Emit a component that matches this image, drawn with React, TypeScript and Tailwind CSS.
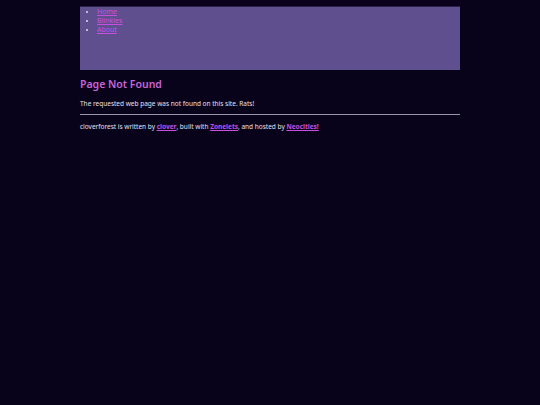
export default function App() {
  const font = { fontFamily: '"Noto Sans", "Open Sans", sans-serif' };
  return (
    <div className="min-h-[405px] w-full bg-[#08031a] text-[#e6e0f0]" style={font}>
      <div className="mx-auto w-[380px] pt-[6px]">
        <nav className="h-[64px] border-t border-[#2a2146] bg-[#5f4f8f]">
          <ul className="list-disc pl-[17px] text-[7px] leading-[9px] marker:text-[#e0d8f0]">
            <li><a href="#" className="text-[#c84fe0] underline">Home</a></li>
            <li><a href="#" className="text-[#c84fe0] underline">Blinkies</a></li>
            <li><a href="#" className="text-[#c84fe0] underline">About</a></li>
          </ul>
        </nav>
        <h1 className="mt-[7px] text-[10.5px] font-semibold leading-[14px] text-[#c963dc]">Page Not Found</h1>
        <p className="mt-[8px] text-[6.5px] leading-[9px]">The requested web page was not found on this site. Rats!</p>
        <hr className="mt-[6px] border-t border-[#9a96a8]" />
        <p className="mt-[7px] text-[6.5px] leading-[9px]">
          cloverforest is written by{' '}
          <a href="#" className="font-bold text-[#c84fe0] underline">clover</a>, built with{' '}
          <a href="#" className="font-bold text-[#c84fe0] underline">Zonelets</a>, and hosted by{' '}
          <a href="#" className="font-bold text-[#c84fe0] underline">Neocities!</a>
        </p>
      </div>
    </div>
  );
}
